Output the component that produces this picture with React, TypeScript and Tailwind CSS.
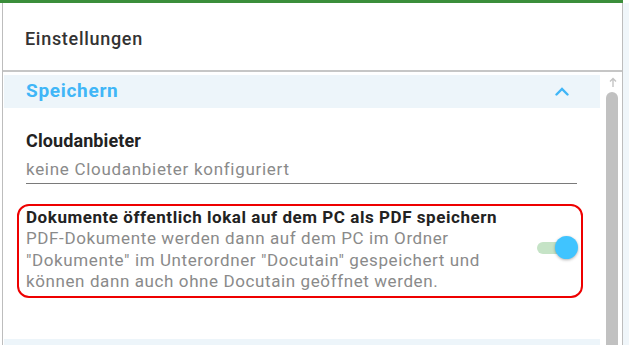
import React from "react";

export default function App() {
  return (
    <div className="w-[629px] h-[345px] overflow-hidden bg-white relative" style={{ fontFamily: "Roboto, 'Liberation Sans', sans-serif" }}>
      <div className="h-[3px] w-[623px] bg-[#3b8e3b]" />
      <div className="flex h-[342px]">
        <div className="w-[2px] bg-white" />
        <div className="w-[621px] border-l border-r border-[#bdbdbd] flex flex-col">
          <div className="h-[67px] flex items-center pt-[4px] px-[22px] text-[18px] tracking-[0.7px] font-medium text-[#333]">Einstellungen</div>
          <div className="h-[2px] bg-[#c6c6c6]" />
          <div className="flex flex-1 min-h-0">
            <div className="w-[597px] flex flex-col pl-[1px]">
              <div className="mt-[3px] h-[33px] bg-[#edf5fa] flex items-center justify-between pl-[22px] pr-[31px]">
                <span className="text-[19px] tracking-[0.7px] font-bold text-[#40b6f7]">Speichern</span>
                <svg width="14" height="9" viewBox="0 0 14 9" fill="none">
                  <path d="M1.5 7.5 L7 2 L12.5 7.5" stroke="#40b6f7" strokeWidth="2.4" strokeLinecap="round" />
                </svg>
              </div>
              <div className="pl-[22px] pr-[23px] pt-[22px]">
                <div className="text-[18px] tracking-[0.1px] font-bold text-[#222] leading-[22px]">Cloudanbieter</div>
                <div className="mt-[6px] text-[17px] tracking-[0.7px] text-[#8a8a8a] leading-[22px] pb-[3px] border-b border-[#7a7a7a]">keine Cloudanbieter konfiguriert</div>
              </div>
              <div className="ml-[13px] mr-[17px] mt-[20px] h-[94px] border-2 border-[#ee0000] rounded-[12px] flex items-center pl-[7px] pr-[3px]">
                <div className="flex-1 self-start pt-[1px]">
                  <div className="text-[17px] tracking-[0.55px] font-bold text-[#222] leading-[21px] whitespace-nowrap">Dokumente öffentlich lokal auf dem PC als PDF speichern</div>
                  <div className="text-[17px] tracking-[0.6px] text-[#8a8a8a] leading-[21.5px] whitespace-nowrap">
                    PDF-Dokumente werden dann auf dem PC im Ordner<br />
                    "Dokumente" im Unterordner "Docutain" gespeichert und<br />
                    können dann auch ohne Docutain geöffnet werden.
                  </div>
                </div>
                <div className="relative w-[41px] h-[24px] mb-[6px] shrink-0">
                  <div className="absolute left-0 top-[6px] w-[36px] h-[12px] rounded-full bg-[#c5e3c6]" />
                  <div className="absolute right-0 top-0 w-[23px] h-[23px] rounded-full bg-[#40c4ff] shadow-[0_1px_3px_rgba(0,0,0,0.3)]" />
                </div>
              </div>
              <div className="flex-1" />
              <div className="h-[6px] bg-[#edf5fa]" />
            </div>
            <div className="flex-1 flex flex-col items-start pt-[5px] pl-[6px]">
              <svg className="ml-[3px]" width="8" height="11" viewBox="0 0 8 11" fill="none">
                <path d="M4 10 V1.5 M1 4.5 L4 1.5 L7 4.5" stroke="#c4c4c4" strokeWidth="1.4" />
              </svg>
              <div className="mt-[4px] w-[12px] flex-1 bg-[#c1c1c1] rounded-t-full" />
            </div>
          </div>
        </div>
        <div className="flex-1 bg-[#f0f6fa]" />
      </div>
    </div>
  );
}
